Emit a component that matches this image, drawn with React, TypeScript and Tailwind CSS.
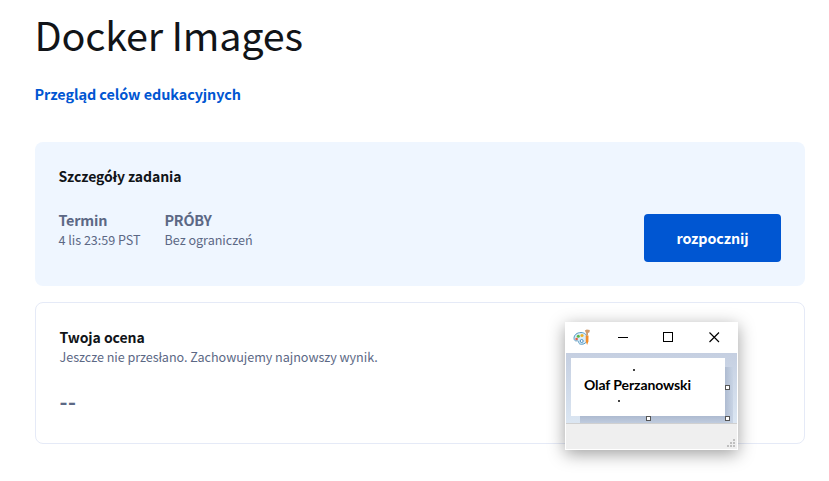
import React from "react";

function PaletteIcon() {
  return (
    <svg width="17" height="17" viewBox="0 0 17 17" className="shrink-0">
      <path
        d="M8 3.500C4 3.500 1 6 1 9.200c0 1.800 1 2.900 2.500 2.700 1.500-.2 2.200.3 2.200 1.500 0 1.200 1.200 1.900 3 1.900 3.300 0 5.700-2.500 5.700-5.900 0-3.300-2.700-5.900-6.400-5.900z"
        fill="#d9ecf8"
        stroke="#5b9dc5"
        strokeWidth="1"
      />
      <circle cx="5.300" cy="7.200" r="1.500" fill="#5cb548" />
      <circle cx="9" cy="6.500" r="1.600" fill="#f0b429" />
      <circle cx="3.600" cy="10" r="1.300" fill="#e0604a" />
      <circle cx="8.700" cy="12" r="1.500" fill="#fff" stroke="#4b8fc0" />
      <path d="M12.700 6.500h2.800l-.1 6-1.300 3.500-1.300-3.500z" fill="#f28c28" />
      <path d="M11.800 1.500l2-.9 3 .4-.3 2.300-1.500.8v2.500h-1.800V4.200z" fill="#cf9a6c" />
    </svg>
  );
}

function Handle({ className }: { className: string }) {
  return <span className={`absolute size-[5px] border border-[#555] bg-white ${className}`} />;
}

function PaintWindow() {
  return (
    <div className="absolute left-[565px] top-[322px] flex h-[128px] w-[173px] flex-col bg-white px-px pb-px shadow-[0_4px_16px_rgba(0,0,0,0.38)]">
      <div className="flex h-[31px] shrink-0 items-center pl-[7px]">
        <PaletteIcon />
        <svg width="103" height="12" viewBox="0 0 103 12" className="ml-7 shrink-0" fill="none" stroke="#000">
          <path d="M0 5.500h10M45.500 .5h9v9h-9z" shapeRendering="crispEdges" />
          <path d="M91.500 .5l9.500 9.500M101 .5l-9.500 9.500" strokeWidth="1.150" />
        </svg>
      </div>
      <div className="relative h-[71px] shrink-0 overflow-hidden border-b border-[#d0d0d0] bg-linear-to-b from-[#c5cfe1] to-[#dbe6f2] pl-[5px] pt-[5px]">
        <div className="absolute bottom-0 right-1 h-[56px] w-[153px] bg-linear-to-r from-[#abb8ce] from-94% to-[#c8d4e5]">
          <div className="absolute bottom-0 left-0 h-2 w-full bg-linear-to-b from-transparent to-[#c8d4e5]/70" />
        </div>
        <div className="relative flex h-[58px] w-[154px] flex-col bg-white pl-[13px] pt-[11px] font-['Lato',sans-serif] text-[14px] font-bold text-black">
          <span className="ml-[49px] size-[2px] bg-[#444]" />
          <span className="mt-[4px] h-5 whitespace-nowrap leading-5 tracking-[-0.1px]">Olaf Perzanowski</span>
          <span className="ml-[34px] mt-[5px] size-[2px] bg-[#444]" />
        </div>
        <Handle className="left-[159px] top-[32px]" />
        <Handle className="left-[80px] top-[63px]" />
        <Handle className="left-[159px] top-[63px]" />
      </div>
      <div className="flex flex-1 items-end justify-end bg-[#efefef] pb-[2px] pr-[2px]">
        <svg width="8" height="8" fill="#bfbfbf" shapeRendering="crispEdges">
          <path d="M6 0h2v2h-2zM3 3h2v2h-2zM6 3h2v2h-2zM0 6h2v2h-2zM3 6h2v2h-2zM6 6h2v2h-2z" />
        </svg>
      </div>
    </div>
  );
}

export default function App() {
  return (
    <div className="relative h-[481px] w-[829px] overflow-hidden bg-white pl-[35px] pr-6 font-['Noto_Sans_CJK_SC','Noto_Sans',sans-serif] text-[#111418]">
      <h1 className="-ml-[0.5px] h-[84px] pt-2.5 text-[39.600px] font-normal leading-[48px] tracking-[-0.230px]">
        Docker Images
      </h1>
      <a className="-ml-[0.5px] block h-[58px] w-max text-[14.400px] font-bold leading-5 tracking-[-0.060px] text-[#0056d2]">
        Przegląd celów edukacyjnych
      </a>
      <section className="flex h-[144px] items-start justify-between rounded-lg bg-[#eff6ff] px-6">
        <div className="-ml-[0.5px] pt-6">
          <h2 className="text-[14px] font-bold leading-5 tracking-[-0.070px]">Szczegóły zadania</h2>
          <div className="flex gap-6 pt-6 text-[#5c6885]">
            <div>
              <div className="text-[14.400px] font-bold leading-5 tracking-[-0.200px]">Termin</div>
              <div className="text-[12.600px] leading-5 tracking-[-0.030px]">4 lis 23:59 PST</div>
            </div>
            <div>
              <div className="text-[14.400px] font-bold leading-5 tracking-[-0.250px]">PRÓBY</div>
              <div className="text-[12.600px] leading-5 tracking-[-0.030px]">Bez ograniczeń</div>
            </div>
          </div>
        </div>
        <button className="mt-[72px] h-12 w-[137px] rounded-[4px] bg-[#0056d2] text-[14.300px] font-bold leading-5 tracking-[-0.100px] text-white">
          rozpocznij
        </button>
      </section>
      <section className="mt-4 h-[142px] rounded-lg border border-[#e5eaf7] px-[23.500px] pt-6">
        <h2 className="text-[14px] font-bold leading-5 tracking-[-0.070px]">Twoja ocena</h2>
        <p className="text-[12.600px] leading-5 tracking-[-0.040px] text-[#5c6885]">
          Jeszcze nie przesłano. Zachowujemy najnowszy wynik.
        </p>
        <div className="mt-[22px] text-[21.600px] font-bold leading-6 tracking-[0.5px] text-[#5c6885]">--</div>
      </section>
      <PaintWindow />
    </div>
  );
}
